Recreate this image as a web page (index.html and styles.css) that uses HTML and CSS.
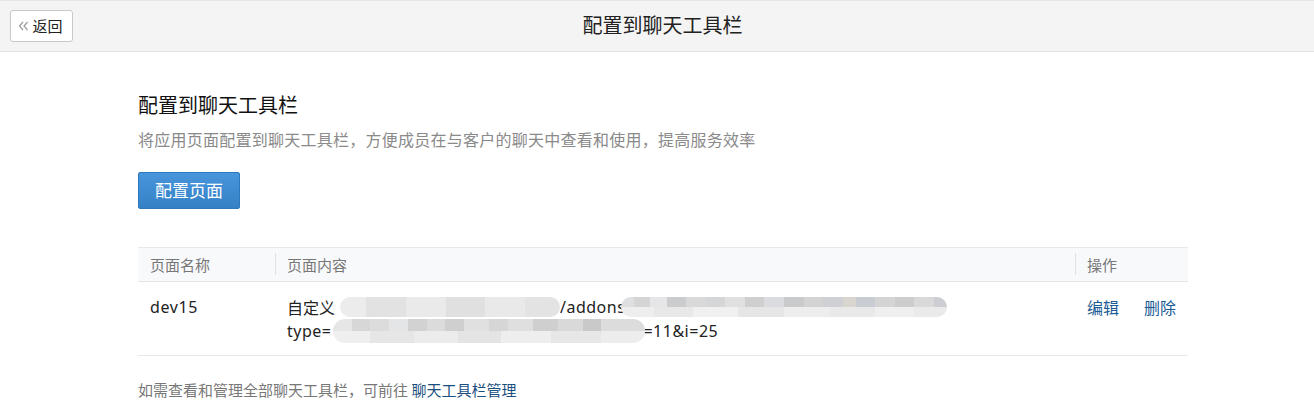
FILE: index.html
```html
<!DOCTYPE html>
<html lang="zh">
<head>
<meta charset="utf-8">
<title>配置到聊天工具栏</title>
<link rel="stylesheet" href="styles.css">
</head>
<body>
<header class="topbar">
  <button class="back-btn"><svg class="back-icon" width="11" height="10" viewBox="0 0 11 10"><polyline points="5,1 1.5,5 5,9" fill="none" stroke="#9a9a9a" stroke-width="1.2"/><polyline points="9.5,1 6,5 9.5,9" fill="none" stroke="#9a9a9a" stroke-width="1.2"/></svg>返回</button>
  <h1 class="topbar-title">配置到聊天工具栏</h1>
</header>
<main class="content">
  <h2 class="section-title">配置到聊天工具栏</h2>
  <p class="section-desc">将应用页面配置到聊天工具栏，方便成员在与客户的聊天中查看和使用，提高服务效率</p>
  <button class="primary-btn">配置页面</button>

  <div class="table">
    <div class="thead">
      <div class="th col-name">页面名称</div>
      <div class="th col-content"><span class="sep"></span>页面内容</div>
      <div class="th col-ops"><span class="sep"></span>操作</div>
    </div>
    <div class="trow">
      <div class="td col-name latin">dev15</div>
      <div class="td col-content">
        <div class="line">自定义<span class="blur blur-a"></span><span class="latin">/addons</span><span class="blur blur-b"></span></div>
        <div class="line"><span class="latin">type=</span><span class="blur blur-c"></span><span class="latin">=11&amp;i=25</span></div>
      </div>
      <div class="td col-ops">
        <a class="op" href="#">编辑</a>
        <a class="op" href="#">删除</a>
      </div>
    </div>
  </div>

  <p class="footnote">如需查看和管理全部聊天工具栏，可前往 <a class="foot-link" href="#">聊天工具栏管理</a></p>
</main>
</body>
</html>
```

FILE: styles.css
```css
* { box-sizing: border-box; }
html, body { margin: 0; padding: 0; }
body {
  background: #ffffff;
  font-family: "Noto Sans CJK SC", "Noto Sans", sans-serif;
  color: #222;
  width: 1314px;
  height: 401px;
  overflow: hidden;
}
.topbar {
  position: relative;
  height: 52px;
  background: #f4f4f4;
  border-top: 1px solid #e6e6e6;
  border-bottom: 1px solid #e2e2e2;
  display: flex;
  align-items: center;
  justify-content: center;
  padding-left: 11px;
}
.back-btn {
  position: absolute;
  left: 10px;
  top: 9px;
  width: 63px;
  height: 32px;
  background: #fff;
  border: 1px solid #c8c8c8;
  border-radius: 3px;
  font-family: inherit;
  font-size: 15px;
  color: #222;
  display: flex;
  align-items: center;
  justify-content: center;
  padding: 0 0 1px 0;
  line-height: 1;
}
.back-icon {
  margin-right: 3px;
  margin-left: -2px;
}
.topbar-title {
  margin: 0;
  font-size: 20px;
  font-weight: 400;
  color: #222;
  line-height: 1;
  position: relative;
  top: -1px;
}
.content {
  width: 1050px;
  margin: 0 0 0 138px;
  padding-top: 39px;
}
.section-title {
  margin: 0;
  font-size: 20px;
  font-weight: 400;
  line-height: 28px;
  color: #111;
}
.section-desc {
  margin: 9px 0 0;
  font-size: 16px;
  letter-spacing: 0.25px;
  line-height: 22px;
  color: #8a8a8a;
}
.primary-btn {
  margin-top: 22px;
  width: 102px;
  height: 37px;
  border: 1px solid #2f78bd;
  border-radius: 2px;
  background: linear-gradient(#4795dc, #3681c6);
  color: #fff;
  font-family: inherit;
  font-size: 17px;
  line-height: 1;
  padding: 0 0 2px;
}
.table {
  margin-top: 38px;
  border-top: 1px solid #e6e8eb;
  border-bottom: 1px solid #e6e8eb;
}
.thead {
  display: flex;
  height: 34px;
  background: #f8f9fb;
  border-bottom: 1px solid #e3e5e8;
  align-items: center;
  font-size: 15px;
  color: #777;
}
.th { position: relative; line-height: 1; }
.sep {
  position: absolute;
  left: 0;
  top: -4px;
  width: 1px;
  height: 22px;
  background: #dfe1e4;
}
.col-name { width: 137px; padding-left: 12px; }
.col-content { flex: 1; padding-left: 12px; }
.col-ops { width: 113px; padding-left: 12px; }
.trow {
  display: flex;
  height: 73px;
  padding-top: 13px;
  font-size: 16px;
  line-height: 24px;
  color: #222;
}
.latin { font-family: "Noto Sans", sans-serif; letter-spacing: 0.5px; }
.td.col-name.latin { font-size: 16px; letter-spacing: 0.6px; }
.line { display: flex; align-items: center; height: 24px; white-space: nowrap; }
.blur {
  display: inline-block;
  height: 20px;
  border-radius: 10px;
  filter: blur(0.6px);
}
.blur-a {
  width: 220px;
  margin-left: 5px;
  background: linear-gradient(90deg, #ececed 0 12%, #e2e2e2 12% 30%, #eaeaeb 30% 48%, #e0e0e1 48% 66%, #e9e9e9 66% 84%, #e3e3e3 84% 100%);
}
.blur-b {
  width: 326px;
  margin-left: -4px;
  background:
    linear-gradient(90deg, #dedfe1 0 4%, #d5d5d5 4% 9%, #e6e6e8 9% 14%, #cbcccd 14% 20%, #d9d9d9 20% 26%, #d4d6d8 26% 32%, #e0e0e0 32% 38%, #cfcfcf 38% 44%, #dbdcdf 44% 50%, #c9cacc 50% 56%, #d3d3d3 56% 62%, #cfd0d3 62% 68%, #d8d6cf 68% 72%, #c8ccd3 72% 78%, #d4d4d4 78% 84%, #cdcdcd 84% 90%, #d9d9d9 90% 96%, #ccced3 96% 100%) top / 100% 50% no-repeat,
    linear-gradient(90deg, #eeeeef 0 10%, #e8e8e8 10% 22%, #f0f0f0 22% 36%, #e6e6e6 36% 50%, #ededee 50% 64%, #e9e9e9 64% 78%, #efefef 78% 90%, #eaeaea 90% 100%) bottom / 100% 50% no-repeat;
}
.blur-c {
  width: 312px;
  margin-left: 2px;
  margin-right: -2px;
  height: 24px;
  border-radius: 12px;
  background:
    linear-gradient(90deg, #e6e6e6 0 6%, #d7d7d7 6% 12%, #dcdcdc 12% 18%, #e4e5e6 18% 24%, #d2d2d2 24% 30%, #dbdbdb 30% 36%, #cfcfcf 36% 42%, #e0e0e0 42% 50%, #d6d6d6 50% 56%, #dfdfdf 56% 64%, #cfcfcf 64% 72%, #d9d9d9 72% 80%, #c9c9c9 80% 86%, #dcdcdc 86% 100%) top / 100% 50% no-repeat,
    linear-gradient(90deg, #efefef 0 12%, #e6e6e6 12% 26%, #ececec 26% 40%, #e4e4e4 40% 54%, #eeeeee 54% 70%, #e7e7e7 70% 86%, #ededed 86% 100%) bottom / 100% 50% no-repeat;
}
.td.col-ops { display: flex; gap: 25px; }
.op { color: #1b5a94; text-decoration: none; height: 24px; }
.footnote {
  margin: 23px 0 0;
  font-size: 15px;
  color: #777;
  line-height: 22px;
}
.foot-link { color: #1b4f80; text-decoration: none; }
```
